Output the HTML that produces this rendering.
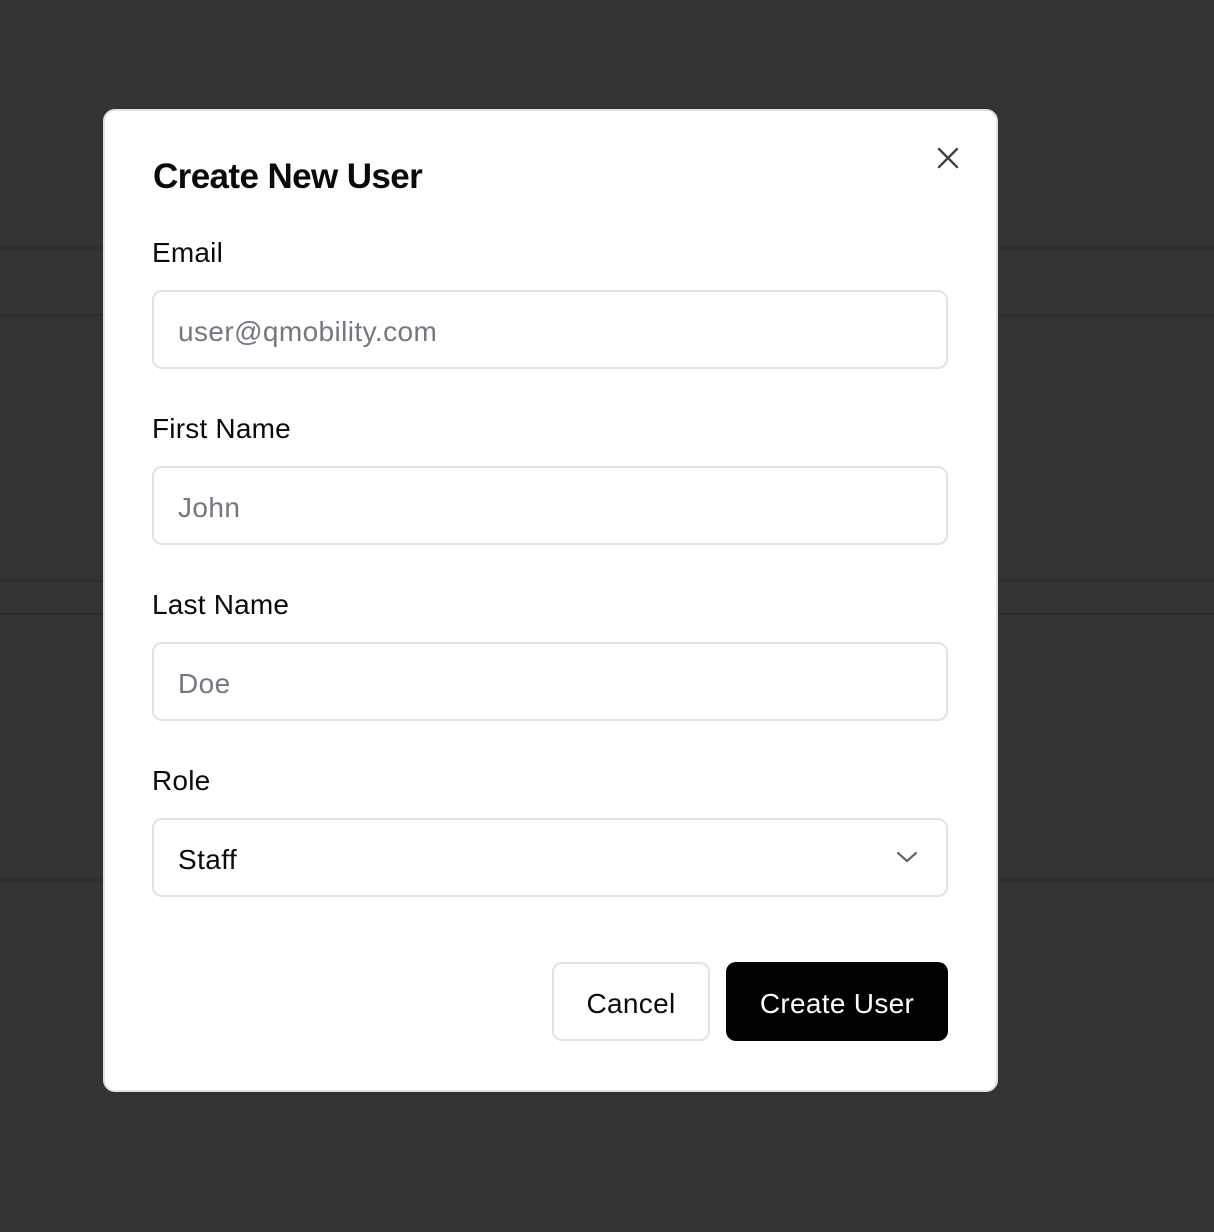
<!DOCTYPE html>
<html><head><meta charset="utf-8"><style>
*{box-sizing:border-box;margin:0;padding:0}
body{width:1214px;height:1232px;background:#333;position:relative;overflow:hidden;font-family:"Liberation Sans",Arial,sans-serif}
.ln{position:absolute;left:0;width:1214px;height:2px;background:#2d2d2d}
.modal{position:absolute;left:103px;top:109px;width:895px;height:983px;background:#fff;border:2px solid #e2e2e2;border-radius:12px}
h1{position:absolute;left:48px;top:46px;font-size:35px;font-weight:bold;letter-spacing:-0.6px;color:#0a0a0a}
.lbl{position:absolute;left:47px;font-size:28px;letter-spacing:0.2px;color:#0a0a0a}
.inp{position:absolute;left:47px;width:796px;height:79px;border:2px solid #e3e3e3;border-radius:10px;font-size:28px;letter-spacing:0.4px;color:#767680;padding-left:24px;line-height:79px}
.btn{position:absolute;top:851px;height:79px;border-radius:10px;font-size:28px;letter-spacing:0.3px;text-align:center}
</style></head><body>
<div class="ln" style="top:247px"></div>
<div class="ln" style="top:314px"></div>
<div class="ln" style="top:580px"></div>
<div class="ln" style="top:613px"></div>
<div class="ln" style="top:879px"></div>
<div class="modal">
<h1>Create New User</h1>
<svg style="position:absolute;left:831px;top:35px" width="24" height="24" viewBox="0 0 24 24"><path d="M3 3L21 21M21 3L3 21" stroke="#444" stroke-width="2.4" stroke-linecap="round"/></svg>
<div class="lbl" style="top:126px">Email</div>
<div class="inp" style="top:179px">user@qmobility.com</div>
<div class="lbl" style="top:302px">First Name</div>
<div class="inp" style="top:355px">John</div>
<div class="lbl" style="top:478px">Last Name</div>
<div class="inp" style="top:531px">Doe</div>
<div class="lbl" style="top:654px">Role</div>
<div class="inp" style="top:707px;color:#0a0a0a">Staff
<svg style="position:absolute;right:28px;top:30px" width="22" height="14" viewBox="0 0 22 14"><path d="M2 3L11 11L20 3" fill="none" stroke="#666" stroke-width="2.2" stroke-linecap="round"/></svg></div>
<div class="btn" style="left:447px;width:158px;border:2px solid #e3e3e3;color:#0a0a0a;line-height:79px">Cancel</div>
<div class="btn" style="left:621px;width:222px;background:#000;color:#fff;line-height:83px">Create User</div>
</div>
</body></html>
